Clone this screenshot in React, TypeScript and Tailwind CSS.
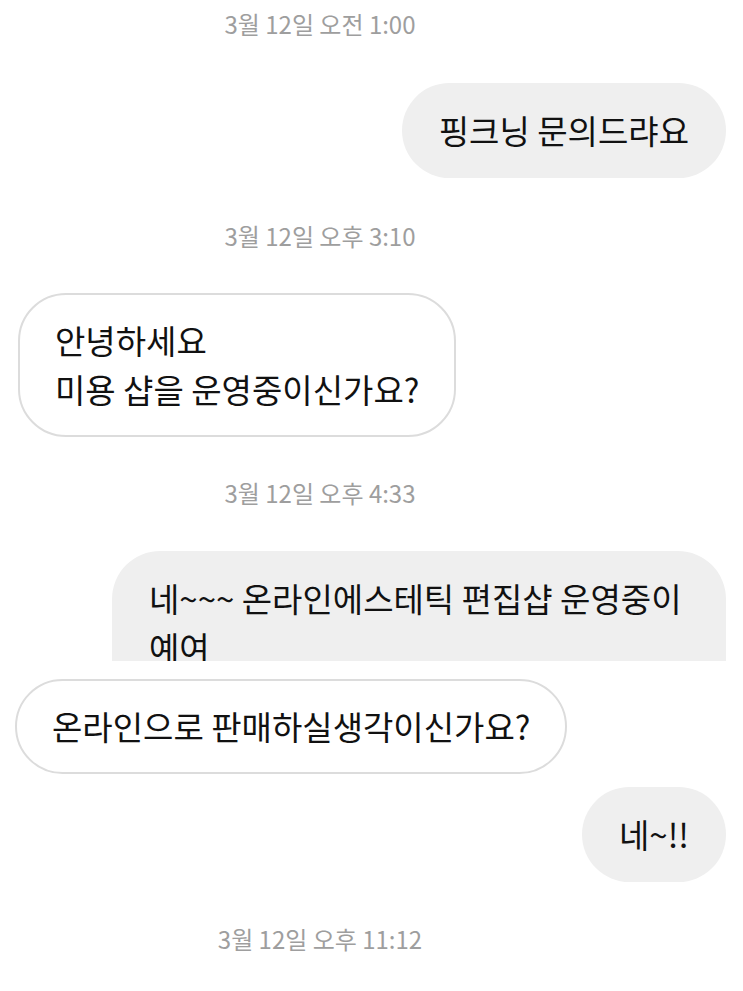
import React from 'react';

type Item =
  | { kind: 'time'; text: string; mt: string }
  | { kind: 'me' | 'them'; lines: string[]; mt: string; extra?: string };

const items: Item[] = [
  { kind: 'time', text: '3월 12일 오전 1:00', mt: 'mt-[9px]' },
  { kind: 'me', lines: ['핑크닝 문의드랴요'], mt: 'mt-[44px]' },
  { kind: 'time', text: '3월 12일 오후 3:10', mt: 'mt-[43px]' },
  { kind: 'them', lines: ['안녕하세요', '미용 샵을 운영중이신가요?'], mt: 'mt-[42px]', extra: 'ml-[18px]' },
  { kind: 'time', text: '3월 12일 오후 4:33', mt: 'mt-[41px]' },
  {
    kind: 'me',
    lines: ['네~~~ 온라인에스테틱 편집샵 운영중이', '예여'],
    mt: 'mt-[43px]',
    extra: 'w-[614px] h-[110px] leading-[45px] rounded-b-none overflow-hidden',
  },
  { kind: 'them', lines: ['온라인으로 판매하실생각이신가요?'], mt: 'mt-[18px]', extra: 'ml-[15px]' },
  { kind: 'me', lines: ['네~!!'], mt: 'mt-[13px]', extra: 'px-[35px]' },
  { kind: 'time', text: '3월 12일 오후 11:12', mt: 'mt-[42px]' },
];

function TimeStamp({ text, mt }: { text: string; mt: string }) {
  return (
    <div className={`${mt} w-[640px] flex justify-center`}>
      <span className="text-[24px] leading-[30px] text-[#9e9e9e]">{text}</span>
    </div>
  );
}

function Bubble({ item }: { item: Extract<Item, { lines: string[] }> }) {
  const mine = item.kind === 'me';
  return (
    <div className={`${item.mt} flex ${mine ? 'justify-end pr-[17px]' : 'justify-start'}`}>
      <div
        className={`rounded-[48px] text-[33px] leading-[49px] text-[#111] whitespace-nowrap ${
          mine ? 'bg-[#efefef] px-[37px] py-[23px]' : 'bg-white border-2 border-[#dcdcdc] py-[21px] px-[35px]'
        } ${item.extra ?? ''}`}
      >
        {item.lines.map((l) => (
          <div key={l}>{l}</div>
        ))}
      </div>
    </div>
  );
}

export default function App() {
  return (
    <div className="w-[743px] h-[991px] bg-white overflow-hidden font-['Noto_Sans_CJK_KR','Noto_Sans',sans-serif]">
      {items.map((it, i) =>
        it.kind === 'time' ? (
          <TimeStamp key={i} text={it.text} mt={it.mt} />
        ) : (
          <Bubble key={i} item={it} />
        )
      )}
    </div>
  );
}
